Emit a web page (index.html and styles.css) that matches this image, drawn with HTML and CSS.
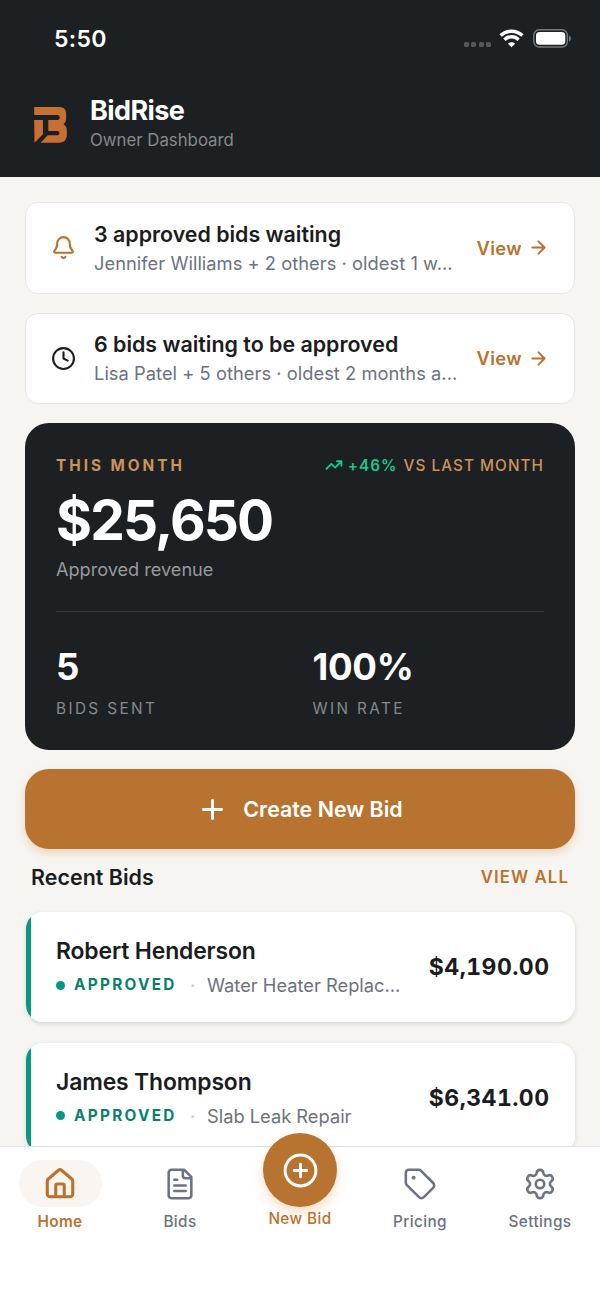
FILE: index.html
```html
<!DOCTYPE html>
<html lang="en">
<head>
<meta charset="utf-8">
<title>BidRise</title>
<link rel="stylesheet" href="styles.css">
</head>
<body>
<div class="app">
  <header class="top">
    <div class="status">
      <span class="time">5:50</span>
      <div class="indicators">
        <span class="signal"><i></i><i></i><i></i><i></i></span>
        <svg class="wifi" viewBox="0 0 25 19"><path d="M12.5 18.3 8.9 14.7a5.1 5.1 0 0 1 7.2 0z" fill="#fff"/><path d="M5.4 10.7a10.1 10.1 0 0 1 14.2 0M1.6 6.6a15.6 15.6 0 0 1 21.8 0" fill="none" stroke="#fff" stroke-width="3.5"/></svg>
        <svg class="battery" viewBox="0 0 39 19"><rect x=".8" y=".8" width="33.6" height="17.2" rx="5.4" fill="none" stroke="#77797b" stroke-width="1.4"/><rect x="3" y="3" width="29.3" height="12.8" rx="3.6" fill="#fff"/><path d="M36 6.4c2.6 1 2.6 5 0 6z" fill="#77797b"/></svg>
      </div>
    </div>
    <div class="brand">
      <svg class="logo" viewBox="42 37 97 107"><path fill="#c86f34" d="M42 37H117Q137 38 137 57V73Q137 83 129 88Q139 94 139 105V122Q138 142 118 143H61L82 121H112Q117 119 117 114T112 108H84V76H112Q118 74 118 68T112 61H42ZM42 76H68V118L43 143Z"/></svg>
      <div class="brand-text">
        <h1>BidRise</h1>
        <p>Owner Dashboard</p>
      </div>
    </div>
  </header>

  <main class="content">
    <section class="alert">
      <svg class="icon alert-icon copper" viewBox="0 0 24 24"><path d="M10.268 21a2 2 0 0 0 3.464 0M3.262 15.326A1 1 0 0 0 4 17h16a1 1 0 0 0 .74-1.673C19.41 13.956 18 12.499 18 8A6 6 0 0 0 6 8c0 4.499-1.411 5.956-2.738 7.326"/></svg>
      <div class="alert-text">
        <h2>3 approved bids waiting</h2>
        <p>Jennifer Williams + 2 others · oldest 1 w...</p>
      </div>
      <a class="view">View<svg class="icon arrow" viewBox="0 0 24 24"><path d="M5 12h14M12 5l7 7-7 7"/></svg></a>
    </section>
    <section class="alert">
      <svg class="icon alert-icon" viewBox="0 0 24 24"><circle cx="12" cy="12" r="10"/><path d="M12 6v6l4 2"/></svg>
      <div class="alert-text">
        <h2>6 bids waiting to be approved</h2>
        <p>Lisa Patel + 5 others · oldest 2 months a...</p>
      </div>
      <a class="view">View<svg class="icon arrow" viewBox="0 0 24 24"><path d="M5 12h14M12 5l7 7-7 7"/></svg></a>
    </section>

    <section class="summary">
      <div class="summary-head">
        <span class="month">THIS MONTH</span>
        <span class="trend"><svg class="icon trend-icon" viewBox="0 0 24 24"><path d="M16 7h6v6M22 7l-8.500 8.500-5-5L2 17"/></svg><b>+46%</b><span>VS LAST MONTH</span></span>
      </div>
      <div class="revenue">$25,650</div>
      <div class="revenue-label">Approved revenue</div>
      <div class="stats">
        <div><strong>5</strong><span>BIDS SENT</span></div>
        <div><strong>100%</strong><span>WIN RATE</span></div>
      </div>
    </section>

    <button class="create"><svg class="icon plus" viewBox="0 0 24 24"><path d="M5 12h14M12 5v14"/></svg><span>Create New Bid</span></button>

    <div class="section-head"><h2>Recent Bids</h2><a>VIEW ALL</a></div>

    <article class="bid">
      <div class="bid-main">
        <h3>Robert Henderson</h3>
        <p><i class="dot"></i><b>APPROVED</b><em>·</em><span>Water Heater Replac...</span></p>
      </div>
      <strong>$4,190.00</strong>
    </article>
    <article class="bid">
      <div class="bid-main">
        <h3>James Thompson</h3>
        <p><i class="dot"></i><b>APPROVED</b><em>·</em><span>Slab Leak Repair</span></p>
      </div>
      <strong>$6,341.00</strong>
    </article>
  </main>

  <nav class="tabs">
    <a class="tab active"><span class="tab-icon"><svg class="icon" viewBox="0 0 24 24"><path d="M15 21v-8a1 1 0 0 0-1-1h-4a1 1 0 0 0-1 1v8M3 10a2 2 0 0 1 .709-1.528l7-5.999a2 2 0 0 1 2.582 0l7 5.999A2 2 0 0 1 21 10v9a2 2 0 0 1-2 2H5a2 2 0 0 1-2-2z"/></svg></span><span>Home</span></a>
    <a class="tab"><span class="tab-icon"><svg class="icon" viewBox="0 0 24 24"><path d="M15 2H6a2 2 0 0 0-2 2v16a2 2 0 0 0 2 2h12a2 2 0 0 0 2-2V7ZM14 2v4a2 2 0 0 0 2 2h4M10 9H8M16 13H8M16 17H8"/></svg></span><span>Bids</span></a>
    <a class="tab new"><span class="fab"><svg class="icon" viewBox="0 0 24 24"><circle cx="12" cy="12" r="10"/><path d="M8 12h8M12 8v8"/></svg></span><span>New Bid</span></a>
    <a class="tab"><span class="tab-icon"><svg class="icon" viewBox="0 0 24 24"><path d="M12.586 2.586A2 2 0 0 0 11.172 2H4a2 2 0 0 0-2 2v7.172a2 2 0 0 0 .586 1.414l8.704 8.704a2.426 2.426 0 0 0 3.420 0l6.580-6.580a2.426 2.426 0 0 0 0-3.420z"/><circle cx="7.500" cy="7.500" r=".5" fill="currentColor"/></svg></span><span>Pricing</span></a>
    <a class="tab"><span class="tab-icon"><svg class="icon" viewBox="0 0 24 24"><path d="M9.671 4.136a2.340 2.340 0 0 1 4.659 0 2.340 2.340 0 0 0 3.319 1.915 2.340 2.340 0 0 1 2.330 4.033 2.340 2.340 0 0 0 0 3.831 2.340 2.340 0 0 1-2.330 4.033 2.340 2.340 0 0 0-3.319 1.915 2.340 2.340 0 0 1-4.659 0 2.340 2.340 0 0 0-3.320-1.915 2.340 2.340 0 0 1-2.330-4.033 2.340 2.340 0 0 0 0-3.831A2.340 2.340 0 0 1 6.350 6.051a2.340 2.340 0 0 0 3.319-1.915"/><circle cx="12" cy="12" r="3"/></svg></span><span>Settings</span></a>
  </nav>
</div>
</body>
</html>
```
FILE: styles.css
```css
* { box-sizing: border-box; }
body, h1, h2, h3, p { margin: 0; }
body { font-family: Inter, "Liberation Sans", sans-serif; color: #1a1c1e; }
.app { display: grid; grid-template-rows: 177px 969px 152px; width: 600px; height: 1298px; overflow: hidden; background: #f6f5f2; white-space: nowrap; }
.icon { display: block; flex: none; fill: none; stroke: currentColor; stroke-width: 2; stroke-linecap: round; stroke-linejoin: round; }
.copper { color: #b87330; }

.top { background: #1c2022; color: #fff; }
.status { display: flex; justify-content: space-between; height: 76px; padding: 0 28px 0 54px; align-items: center; }
.time { padding-top: 2px; font-size: 23px; font-weight: 600; line-height: 28px; letter-spacing: .3px; }
.indicators { display: flex; align-items: center; }
.signal { display: flex; gap: 2.500px; margin: 12px 8px 0 0; }
.signal i { width: 5px; height: 5px; border-radius: 1.500px; background: #55595b; }
.wifi { width: 25px; height: 19px; margin-right: 9px; }
.battery { width: 39px; height: 19px; }
.brand { display: flex; align-items: center; padding: 18px 34px 0; }
.logo { width: 33px; height: 36px; margin: 3px 23px 0 0; }
.brand h1 { font-size: 27px; font-weight: 700; line-height: 34px; letter-spacing: -.6px; }
.brand p { font-size: 16.800px; line-height: 24px; color: #87898b; letter-spacing: 0; }

.content { display: flex; flex-direction: column; padding: 25px 25px 0; overflow: hidden; }
.alert { display: flex; flex: none; align-items: center; height: 91.500px; margin-bottom: 19px; padding: 0 25px; border: 1.500px solid #e6e5e6; border-radius: 13px; background: #fff; }
.alert-icon { width: 25px; height: 25px; margin-right: 18px; }
.alert-text { flex: 1; }
.alert h2 { font-size: 21.400px; font-weight: 600; line-height: 30px; }
.alert p { font-size: 18.300px; line-height: 28px; letter-spacing: .040px; color: #6b7280; }
.view { display: flex; align-items: center; gap: 6px; color: #b87330; font-size: 18.300px; font-weight: 600; letter-spacing: .4px; }
.arrow { width: 21px; height: 21px; stroke-width: 2.300; }

.summary { flex: none; height: 327px; padding: 30px 31px 0; border-radius: 24px; background: #1c2022; color: #fff; }
.summary-head { display: flex; justify-content: space-between; height: 24px; align-items: center; color: #cd935b; }
.month { font-size: 15.300px; font-weight: 700; letter-spacing: 3px; }
.trend { display: flex; align-items: center; font-size: 15.300px; font-weight: 500; letter-spacing: 1.050px; }
.trend-icon { width: 18px; height: 18px; margin-right: 5px; color: #14c98b; stroke-width: 2.400; }
.trend b { margin-right: 6px; color: #14c98b; font-weight: 600; }
.revenue { margin-top: 10px; font-size: 55px; font-weight: 700; line-height: 66px; letter-spacing: -1.850px; }
.revenue-label { margin-top: 3px; font-size: 18.200px; line-height: 26px; letter-spacing: -.040px; color: #98999b; }
.stats { display: grid; grid-template-columns: 1fr 1fr; column-gap: 25px; margin-top: 29px; padding-top: 33px; border-top: 1.500px solid #373b3d; }
.stats strong { display: block; font-size: 36.600px; font-weight: 700; line-height: 44px; letter-spacing: -.3px; }
.stats span { display: block; margin-top: 9px; font-size: 15.300px; line-height: 22px; letter-spacing: 2.400px; color: #87898b; }

.create { display: flex; flex: none; align-items: center; justify-content: center; height: 80px; margin-top: 19px; border: 0; border-radius: 24px; background: #b87330; box-shadow: 0 4px 8px rgb(220 140 60 / 30%); color: #fff; font: 600 21.400px Inter, sans-serif; }
.plus { width: 31px; height: 31px; margin-right: 15px; stroke-width: 2.300; }

.section-head { display: flex; flex: none; justify-content: space-between; align-items: center; height: 63px; padding: 0 6px 8px; }
.section-head h2 { font-size: 21.400px; font-weight: 600; letter-spacing: .050px; }
.section-head a { color: #b87330; font-size: 16.800px; font-weight: 600; letter-spacing: 1.100px; }
.bid { display: flex; flex: none; align-items: center; justify-content: space-between; height: 110px; margin: 0 0 20.500px 1px; padding: 0 25.500px 0 30px; border-radius: 17px; background: linear-gradient(to right, #079783 5px, #fff 5px); box-shadow: 0 1.500px 4px rgb(0 0 0 / 13%); }
.bid h3 { font-size: 22.900px; font-weight: 600; line-height: 32px; letter-spacing: -.130px; }
.bid p { display: flex; align-items: center; margin-top: 4px; font-size: 18.300px; line-height: 28px; color: #6b7280; }
.bid .dot { width: 9px; height: 9px; margin-right: 9px; border-radius: 50%; background: #079783; }
.bid b { width: 116px; color: #087f6e; font-size: 15.300px; font-weight: 700; letter-spacing: 2.300px; }
.bid em { width: 17px; color: #c4c6ca; font-style: normal; }
.bid strong { font-size: 23px; font-weight: 700; letter-spacing: .450px; font-variant-numeric: tabular-nums; }

.tabs { position: relative; display: grid; grid-template-columns: repeat(5, 1fr); border-top: 1.500px solid #e1e1e3; background: #fff; color: #6b7280; }
.tab { display: flex; flex-direction: column; align-items: center; padding-top: 13px; font-size: 15.300px; font-weight: 500; line-height: 20px; letter-spacing: .4px; }
.tab-icon { display: grid; place-items: center; width: 83px; height: 47px; margin-bottom: 5px; padding-top: 1px; border-radius: 23.500px; }
.tab-icon .icon { width: 34px; height: 34px; stroke-width: 1.800; }
.active { color: #b87330; font-weight: 600; }
.active .tab-icon { background: #faf5f0; }
.active .tab-icon .icon { stroke-width: 2.200; }
.new { padding: 0; color: #b87330; }
.fab { display: grid; place-items: center; width: 74px; height: 74px; margin: -14px 0 2px; border-radius: 50%; background: #b87330; box-shadow: 0 6px 12px rgb(220 140 60 / 28%); color: #fff; }
.fab .icon { width: 37px; height: 37px; stroke-width: 1.900; }
```
